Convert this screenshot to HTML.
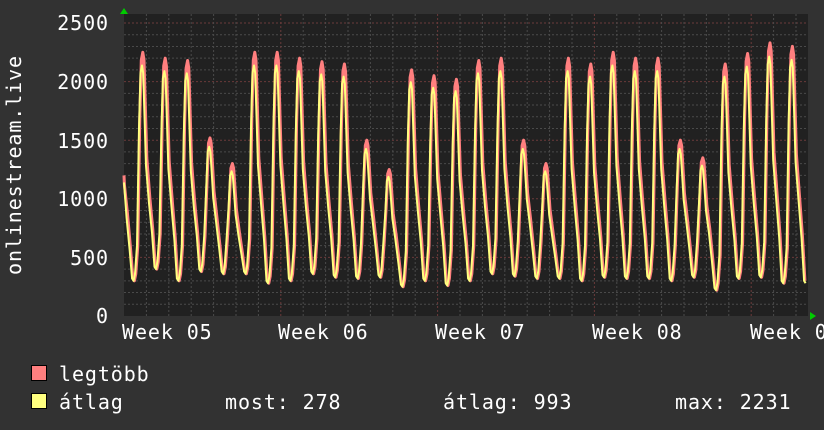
<!DOCTYPE html>
<html><head><meta charset="utf-8"><style>
html,body{margin:0;padding:0;background:#323232;}
body{width:824px;height:430px;overflow:hidden;position:relative;font-family:"DejaVu Sans Mono","Liberation Mono",monospace;color:#fff;}
svg{position:absolute;left:0;top:0}
text{letter-spacing:0.9px}
</style></head><body>
<svg id="g" width="824" height="430" xmlns="http://www.w3.org/2000/svg" font-family="DejaVu Sans Mono, Liberation Mono, monospace" font-size="20" fill="#fff">
<rect x="124" y="14" width="684" height="302" fill="#212121"/>
<g id="grid"></g>
<g id="data"></g>
<polygon points="120,14 128,14 124,8" fill="#0c0"/>
<polygon points="810,312 810,320 816,316" fill="#0c0"/>
<g text-anchor="end">
<text x="109" y="30">2500</text>
<text x="109" y="89">2000</text>
<text x="109" y="148">1500</text>
<text x="109" y="206">1000</text>
<text x="109" y="265">500</text>
<text x="109" y="323">0</text>
</g>
<text x="122" y="339">Week 05</text>
<text x="278" y="339">Week 06</text>
<text x="435" y="339">Week 07</text>
<text x="592" y="339">Week 08</text>
<text x="750" y="339">Week 09</text>
<text transform="translate(21,165) rotate(-90)" text-anchor="middle">onlinestream.live</text>
<rect x="31.5" y="365.5" width="15" height="15" fill="#ff7f7f" stroke="#000"/>
<rect x="31.5" y="393.5" width="15" height="15" fill="#ffff7f" stroke="#000"/>
<text x="59" y="381">legtöbb</text>
<text x="59" y="409">átlag</text>
<text x="225" y="409">most: 278</text>
<text x="443" y="409">átlag: 993</text>
<text x="675" y="409">max: 2231</text>
</svg>
<script>
var ns="http://www.w3.org/2000/svg";
function el(p,t,a){var e=document.createElementNS(ns,t);for(var k in a)e.setAttribute(k,a[k]);p.appendChild(e);return e;}
var grid=document.getElementById('grid');
function Y(v){return 316-v*293/2500;}
for(var v=100;v<=2500;v+=100){var y=Y(v);var maj=v%500==0;
 el(grid,'line',{x1:124,x2:808,y1:y,y2:y,stroke:maj?'#6a3a3a':'#4a4a4a','stroke-dasharray':'2,2','stroke-width':1});}
var day=22.4;
for(var i=1;i<31;i++){var x=124+i*day;var maj=(i%7==0);
 el(grid,'line',{x1:x,x2:x,y1:14,y2:316,stroke:maj?'#6a3a3a':'#4a4a4a','stroke-dasharray':'2,2','stroke-width':1});}
var peaks=[1600,2250,2200,2180,1520,1300,2250,2250,2200,2170,2150,1500,1250,2100,2050,2020,2180,2200,1500,1300,2200,2150,2250,2200,2200,1500,1350,2150,2240,2330,2300];
var troughs=[300,300,400,300,380,360,360,280,300,360,330,320,330,250,300,260,300,360,340,320,320,300,330,320,320,300,330,220,320,330,280];
function line(k,dx,col,sw){
 var pts=[];
 for(var i=0;i<peaks.length;i++){
  var px=124+18+(i-1)*day+dx, pk=peaks[i]*k, tr=troughs[i], tn=troughs[Math.min(30,i+1)];
  var kp=[[-7,tr+60],[-5,tr+300],[-3,pk*0.75],[-1.5,pk*0.97],[0,pk],[1.2,pk*0.97],[2.5,pk*0.8],[4,pk*0.6],[7,pk*0.45],[10,(pk*0.45+tn)/2+30],[12.5,tn+20],[14,tn]];
  if(pk<1700){kp[6][1]=pk*0.85;kp[7][1]=pk*0.7;kp[8][1]=pk*0.55;kp[9][1]=(pk*0.55+tn)/2;}
  for(var j=0;j<kp.length;j++){var x=px+kp[j][0];if(x>=124&&x<=806)pts.push(x.toFixed(1)+','+Y(kp[j][1]).toFixed(1));}
 }
 pts.unshift('124,'+Y(1200*k).toFixed(1));
 el(document.getElementById('data'),'polyline',{points:pts.join(' '),fill:'none',stroke:col,'stroke-width':sw,'stroke-linejoin':'round'});}
line(1,0.8,'#ff7f7f',3);line(0.95,0,'#ffff7f',2);
</script>
</body></html>
